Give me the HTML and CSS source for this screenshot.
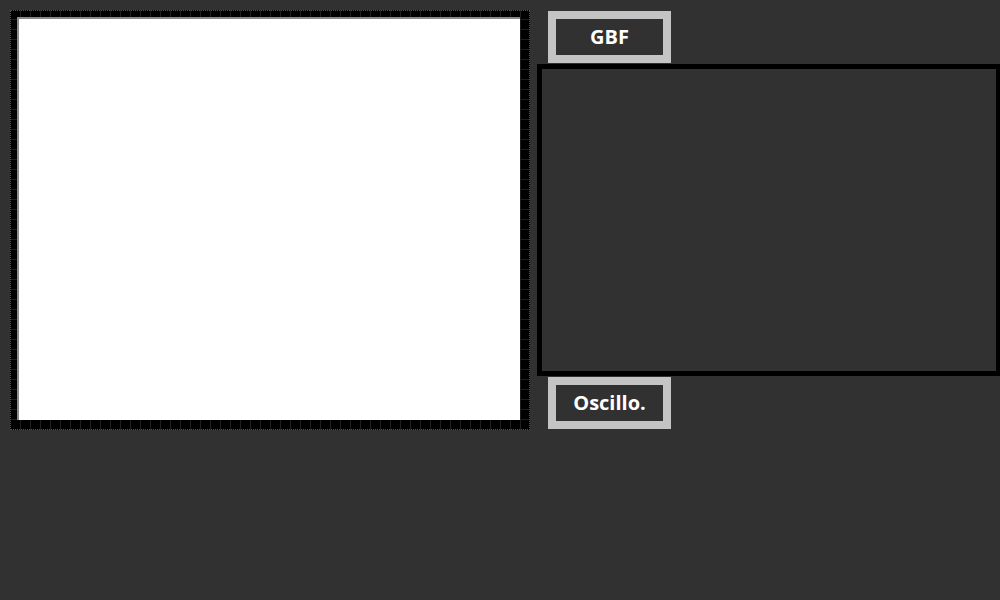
FILE: index.html
```html
<!DOCTYPE html>
<html>
<head>
<meta charset="utf-8">
<link rel="stylesheet" href="styles.css">
</head>
<body>
<div class="page">
  <div class="frame">
    <div class="canvas"></div>
  </div>
  <div class="side">
    <div class="btn">GBF</div>
    <div class="panel"></div>
    <div class="btn">Oscillo.</div>
  </div>
</div>
</body>
</html>
```
FILE: styles.css
```css
html, body {
  margin: 0;
  padding: 0;
  background: #313131;
  overflow: hidden;
  width: 1000px;
  height: 600px;
}
.page {
  display: flex;
  align-items: flex-start;
  padding: 10px 0 0 10px;
}
.frame {
  box-sizing: border-box;
  width: 520px;
  height: 420px;
  background-color: #000;
  background-image:
    repeating-linear-gradient(90deg, transparent 0 9px, #1e1e1e 9px 10px),
    repeating-linear-gradient(0deg, transparent 0 9px, #1e1e1e 9px 10px);
  border: 1px dotted #555;
  padding: 6px 9px 9px 6px;
  flex: none;
}
.canvas {
  box-sizing: border-box;
  width: 100%;
  height: 100%;
  background: #fff;
  border-top: 2px solid #8a8a8a;
  border-left: 2px solid #8a8a8a;
}
.side {
  margin-left: 7px;
  display: flex;
  flex-direction: column;
  align-items: flex-start;
  flex: none;
}
.btn {
  box-sizing: border-box;
  width: 123px;
  height: 52px;
  margin: 1px 0 0 11px;
  border: 8px solid #c4c4c4;
  background: #313131;
  color: #fff;
  font-family: "Open Sans", sans-serif;
  font-weight: 700;
  font-size: 20px;
  line-height: 1;
  display: flex;
  align-items: center;
  justify-content: center;
}
.panel {
  box-sizing: border-box;
  width: 464px;
  height: 312px;
  margin-top: 1px;
  border: 5px solid #000;
  background: #313131;
}
```
